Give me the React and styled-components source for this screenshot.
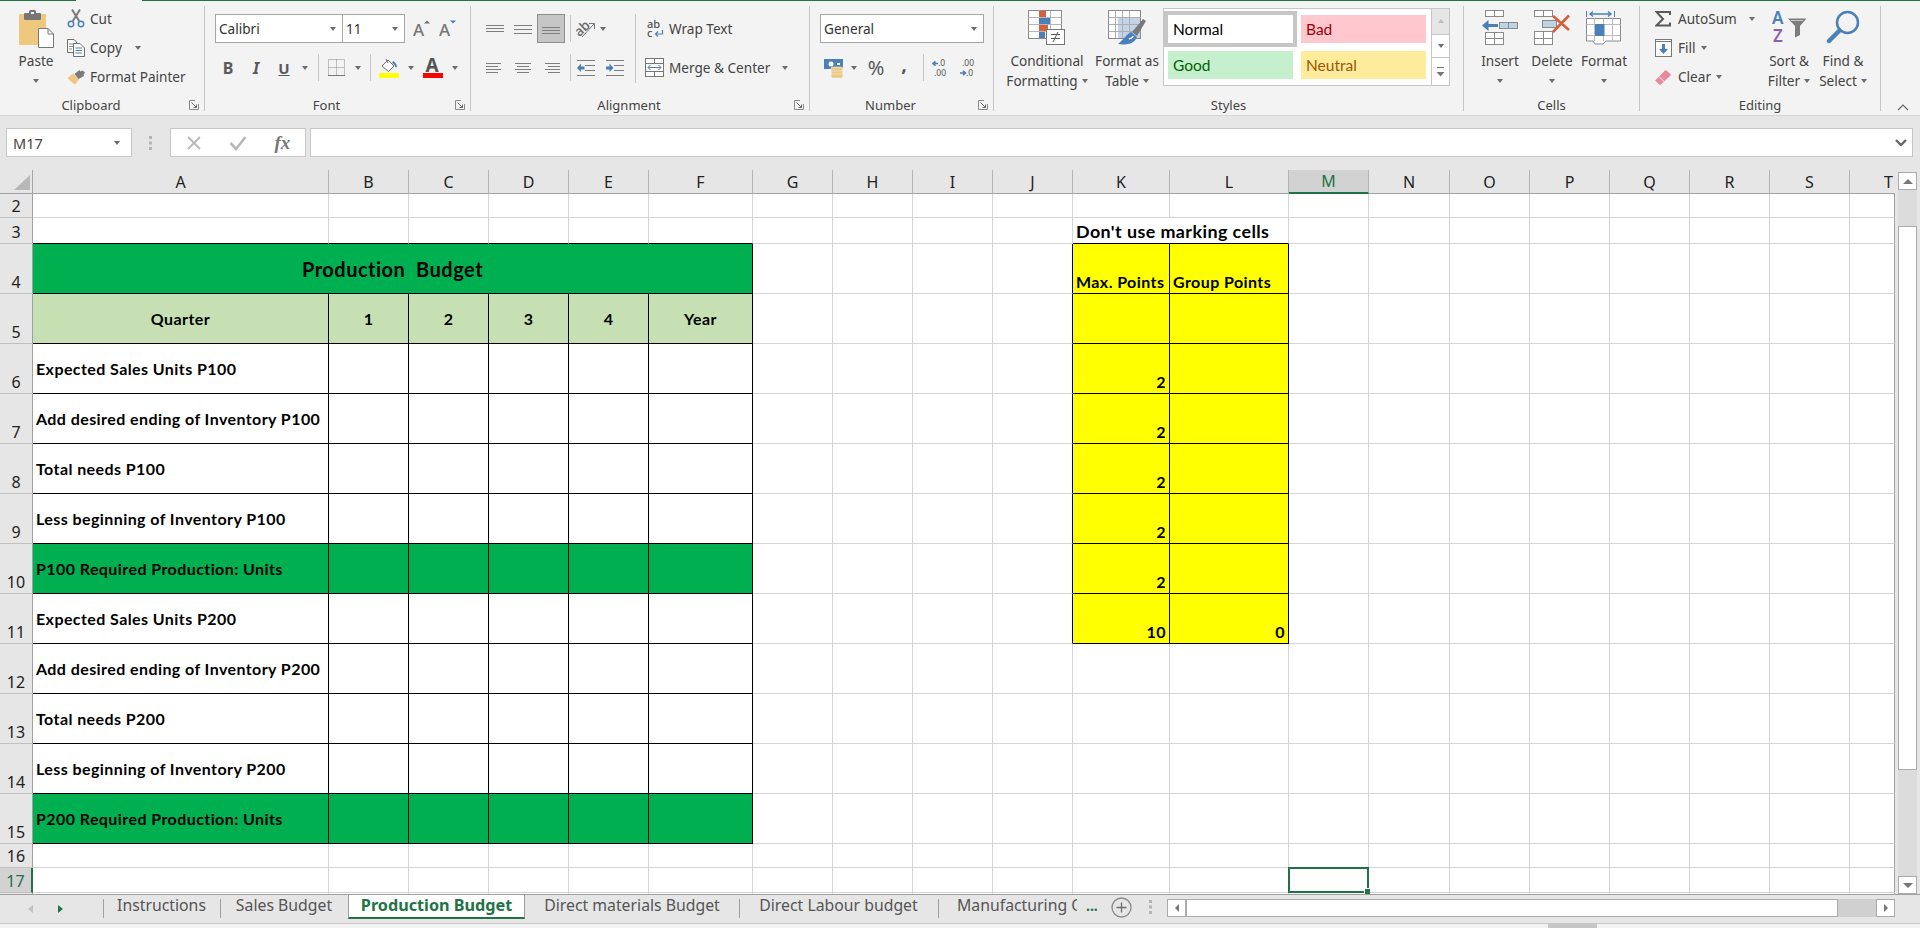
// App.jsx
// Excel window with the Production Budget sheet open

import styled, { createGlobalStyle } from "styled-components";

const UI_FONT = '"Noto Sans", "Open Sans", "Liberation Sans", sans-serif';
const SHEET_FONT = 'Lato, "Noto Sans", "Liberation Sans", sans-serif';

const GREEN = "#00b050";
const LIGHT_GREEN = "#c6e0b4";
const YELLOW = "#ffff00";
const XL_GREEN = "#217346";
const GRID = "#d4d4d4";

const GlobalStyle = createGlobalStyle`
  html, body { margin: 0; padding: 0; height: 100%; overflow: hidden; background: #e6e6e6; }
  body { font-family: ${UI_FONT}; color: #444; }
  * { box-sizing: border-box; }
  svg { display: block; flex: none; }
`;

const Window = styled.div`
  width: 1920px;
  height: 928px;
  display: flex;
  flex-direction: column;
  overflow: hidden;
`;

// Top line of the ribbon, broken under the active tab

const TopLine = styled.div`
  height: 1px;
  flex: none;
  display: flex;
  background: ${XL_GREEN};
`;

const TopGap = styled.div`
  width: 66px;
  margin-left: 76px;
  background: #f3f3f3;
`;

const Ribbon = styled.div`
  height: 115px;
  flex: none;
  display: flex;
  background: #f3f3f3;
  border-bottom: 1px solid #d6d6d6;
`;

const Group = styled.div`
  width: ${(p) => p.$w}px;
  flex: none;
  display: flex;
  flex-direction: column;
`;

const GroupBody = styled.div`
  height: 94px;
  flex: none;
  display: flex;
  align-items: flex-start;
  padding-left: ${(p) => p.$pad || 0}px;
`;

const GroupFooter = styled.div`
  height: 20px;
  display: flex;
  align-items: center;
  font-size: 13px;
  color: #444;
`;

const GroupLabel = styled.div`
  flex: 1;
  text-align: center;
`;

const LauncherSlot = styled.div`
  width: 22px;
  padding-left: 7px;
`;

const GroupSep = styled.div`
  width: 1px;
  flex: none;
  margin: 5px 0 4px;
  background: #c6c6c6;
`;

const CollapseSlot = styled.div`
  flex: 1;
  display: flex;
  align-items: flex-end;
  justify-content: flex-end;
  padding: 0 11px 4px 0;
`;

const LargeButton = styled.div`
  width: ${(p) => p.$w}px;
  flex: none;
  margin-left: ${(p) => p.$ml || 0}px;
  display: flex;
  flex-direction: column;
  align-items: center;
  padding-top: 9px;
  font-size: 13.6px;
  line-height: 20px;
  white-space: nowrap;
`;

const LargeIcon = styled.div`
  height: 41px;
`;

const LabelLine = styled.div`
  height: 20px;
  display: flex;
  align-items: center;
  gap: 4px;
`;

const SmallStack = styled.div`
  width: ${(p) => p.$w}px;
  flex: none;
  margin-left: ${(p) => p.$ml || 0}px;
  padding-top: 3px;
`;

const SmallRow = styled.div`
  height: 29px;
  display: flex;
  align-items: center;
  font-size: 13.6px;
  white-space: nowrap;
`;

const SmallIcon = styled.div`
  width: 23px;
  flex: none;
`;

const Caret = styled.span`
  display: block;
  flex: none;
  width: 0;
  height: 0;
  border-left: 3.5px solid transparent;
  border-right: 3.5px solid transparent;
  border-top: 4px solid #6c6c6c;
  margin-left: ${(p) => p.$ml || 0}px;
`;

const ControlStack = styled.div`
  padding-top: 13px;
  display: flex;
  flex-direction: column;
  gap: 10px;
`;

const ControlRow = styled.div`
  height: 29px;
  display: flex;
  align-items: center;
  padding-left: ${(p) => p.$pad || 0}px;
`;

const Slot = styled.div`
  width: ${(p) => p.$w}px;
  height: ${(p) => (p.$active ? 29 : 24)}px;
  flex: none;
  display: flex;
  align-items: center;
  justify-content: center;
  margin-left: ${(p) => p.$ml || 0}px;
  padding-bottom: ${(p) => p.$raise || 0}px;
  font-size: ${(p) => p.$size || 15}px;
  font-weight: ${(p) => (p.$bold ? 700 : 400)};
  font-style: ${(p) => (p.$italic ? "italic" : "normal")};
  text-decoration: ${(p) => (p.$under ? "underline" : "none")};
  color: #5a5a5a;
  background: ${(p) => (p.$active ? "#c6c6c6" : "transparent")};
  border: ${(p) => (p.$active ? "1px solid #8e8e8e" : "none")};
`;

const ThinSep = styled.div`
  width: 1px;
  height: 27px;
  flex: none;
  margin-left: ${(p) => p.$ml || 0}px;
  background: #c6c6c6;
`;

const TallSep = styled.div`
  width: 1px;
  height: 69px;
  flex: none;
  margin-top: 13px;
  background: #c6c6c6;
`;

const Combo = styled.div`
  width: ${(p) => p.$w}px;
  height: 29px;
  flex: none;
  margin-left: ${(p) => p.$ml || 0}px;
  display: flex;
  align-items: center;
  justify-content: space-between;
  padding: 0 6px 0 3px;
  background: #fff;
  border: 1px solid #a6a6a6;
  font-size: 13.6px;
  color: #333;
`;

const AlignBlock = styled.div`
  width: 164px;
  flex: none;
  padding-left: 10px;
`;

const MergeBlock = styled.div`
  padding: 13px 0 0 9px;
  display: flex;
  flex-direction: column;
  gap: 10px;
`;

const MergeRow = styled.div`
  height: 29px;
  display: flex;
  align-items: center;
  font-size: 13.6px;
  white-space: nowrap;
`;

const MergeIcon = styled.div`
  width: 24px;
  flex: none;
  display: flex;
  justify-content: ${(p) => (p.$end ? "flex-end" : "flex-start")};
  padding-right: ${(p) => (p.$end ? 5 : 0)}px;
`;

// Cell styles gallery

const Gallery = styled.div`
  width: 287px;
  height: 78px;
  flex: none;
  margin-top: 7px;
  display: flex;
  background: #fff;
  border: 1px solid #c6c6c6;
`;

const GalleryGrid = styled.div`
  width: 267px;
  flex: none;
  padding-top: 2px;
  display: grid;
  grid-template-columns: 133px 133px;
  grid-template-rows: 36px 36px;
`;

const GalleryCell = styled.div`
  border: 4px solid ${(p) => (p.$selected ? "#c6c6c6" : "transparent")};
  background: ${(p) => p.$bg};
  background-clip: padding-box;
  color: ${(p) => p.$color};
  font-family: ${SHEET_FONT};
  font-size: 15.5px;
  display: flex;
  align-items: center;
  padding-left: 5px;
`;

const GalleryScroll = styled.div`
  flex: 1;
  display: flex;
  flex-direction: column;
  border-left: 1px solid #c6c6c6;
`;

const GalleryArrow = styled.div`
  flex: ${(p) => p.$grow || 1};
  display: flex;
  align-items: center;
  justify-content: center;
  background: ${(p) => (p.$off ? "#e6e6e6" : "#fff")};
  border-bottom: ${(p) => (p.$last ? "none" : "1px solid #c6c6c6")};
`;

const TinyUp = styled.span`
  width: 0;
  height: 0;
  border-left: 3.5px solid transparent;
  border-right: 3.5px solid transparent;
  border-bottom: 4px solid #bdbdbd;
`;

// Formula bar

const FormulaBar = styled.div`
  height: 54px;
  flex: none;
  display: flex;
  align-items: flex-start;
  padding: 12px 0 0 6px;
  background: #e6e6e6;
`;

const NameBox = styled.div`
  width: 126px;
  height: 29px;
  flex: none;
  display: flex;
  align-items: center;
  justify-content: space-between;
  padding: 0 11px 0 6px;
  background: #fff;
  border: 1px solid #c6c6c6;
  font-size: 14.5px;
  color: #444;
`;

const GripSlot = styled.div`
  width: 38px;
  height: 29px;
  flex: none;
  display: flex;
  align-items: center;
  justify-content: center;
`;

const FxBox = styled.div`
  width: 136px;
  height: 29px;
  flex: none;
  display: flex;
  align-items: center;
  justify-content: space-around;
  padding: 0 1px;
  background: #fff;
  border: 1px solid #c6c6c6;
`;

const FxText = styled.span`
  font-family: "Liberation Serif", serif;
  font-style: italic;
  font-weight: 700;
  font-size: 19px;
  color: #777;
`;

const FormulaInput = styled.div`
  width: 1603px;
  height: 29px;
  flex: none;
  margin-left: 4px;
  display: flex;
  align-items: center;
  justify-content: flex-end;
  padding-right: 5px;
  background: #fff;
  border: 1px solid #c6c6c6;
`;

// Sheet

const SheetArea = styled.div`
  height: 724px;
  flex: none;
  display: flex;
  background: #e6e6e6;
`;

const SheetGrid = styled.div`
  width: 1895px;
  height: 724px;
  flex: none;
  overflow: hidden;
  display: grid;
  grid-template-columns: 33px 296px repeat(4, 80px) 104px repeat(4, 80px) 97px 119px 80px 81px repeat(5, 80px) 45px;
  grid-template-rows: 24px 24px 26px repeat(12, 50px) 24px 25px 30px;
`;

const Corner = styled.div`
  background: #e6e6e6;
  border-right: 1px solid #a6a6a6;
  border-bottom: 1px solid #a0a0a0;
  display: flex;
  padding: 5px 2px 3px 14px;
`;

const CornerMark = styled.div`
  width: 100%;
  height: 100%;
  background: #b8b8b8;
  clip-path: polygon(100% 0, 100% 100%, 0 100%);
`;

const ColHeader = styled.div`
  display: flex;
  align-items: center;
  justify-content: ${(p) => (p.$last ? "flex-end" : "center")};
  padding-right: ${(p) => (p.$last ? 2 : 0)}px;
  font-size: 16px;
  color: ${(p) => (p.$active ? XL_GREEN : "#222")};
  background: ${(p) => (p.$active ? "#d2d2d2" : "#e6e6e6")};
  border-right: ${(p) => (p.$last ? "none" : "1px solid #b4b4b4")};
  border-bottom: ${(p) => (p.$active ? `2px solid ${XL_GREEN}` : "1px solid #a0a0a0")};
`;

const RowHeader = styled.div`
  display: flex;
  align-items: flex-end;
  justify-content: center;
  font-size: 16px;
  line-height: 22px;
  color: ${(p) => (p.$active ? XL_GREEN : "#222")};
  background: ${(p) => (p.$active ? "#d2d2d2" : "#e6e6e6")};
  border-right: ${(p) => (p.$active ? `2px solid ${XL_GREEN}` : "1px solid #a0a0a0")};
  border-bottom: 1px solid #c0c0c0;
`;

const Cell = styled.div`
  grid-column: span ${(p) => p.$span || 1};
  position: relative;
  display: flex;
  align-items: ${(p) => (p.$bottom ? "flex-end" : "center")};
  justify-content: ${(p) => p.$justify || "flex-start"};
  padding: ${(p) => (p.$bottom ? "0 3px 1px" : p.$size === 20 ? "0 3px" : "1px 3px 0")};
  background: ${(p) => p.$bg || "#fff"};
  border-right: 1px solid ${(p) => (p.$edge ? "#a0a0a0" : p.$right ? "#000" : GRID)};
  border-bottom: 1px solid ${(p) => (p.$under ? "#000" : GRID)};
  font-family: ${SHEET_FONT};
  font-weight: 700;
  font-size: ${(p) => p.$size || 16}px;
  letter-spacing: ${(p) => (p.$size === 20 ? 0.5 : 0.42)}px;
  line-height: ${(p) => (p.$bottom ? 20 : 18)}px;
  color: #000;
  white-space: nowrap;
`;

const SelectionBox = styled.div`
  position: absolute;
  inset: -1px;
  border: 2px solid ${XL_GREEN};
  z-index: 2;
`;

const SelectionHandle = styled.div`
  position: absolute;
  right: -3px;
  bottom: -3px;
  width: 6px;
  height: 6px;
  background: ${XL_GREEN};
  border: 1px solid #fff;
  border-width: 1px 0 0 1px;
`;

const VScroll = styled.div`
  flex: 1;
  display: flex;
  flex-direction: column;
  padding: 2px 3px 0 3px;
  background: #e6e6e6;
`;

const ScrollButton = styled.div`
  height: 18px;
  flex: none;
  display: flex;
  align-items: center;
  justify-content: center;
  background: #fff;
  border: 1px solid #ababab;
`;

const ScrollTrack = styled.div`
  flex: 1;
  background: #dcdcdc;
  padding-top: 36px;
  padding-bottom: 106px;
`;

const ScrollThumb = styled.div`
  height: 100%;
  background: #fff;
  border: 1px solid #ababab;
`;

const ArrowUp = styled.span`
  width: 0;
  height: 0;
  border-left: 5px solid transparent;
  border-right: 5px solid transparent;
  border-bottom: 5px solid #777;
`;

const ArrowDown = styled(ArrowUp)`
  border-bottom: none;
  border-top: 5px solid #777;
`;

// Sheet tabs

const TabBar = styled.div`
  height: 25px;
  flex: none;
  display: flex;
  align-items: stretch;
  background: #e6e6e6;
  border-top: 1px solid #9f9f9f;
`;

const TabNav = styled.div`
  width: 103px;
  flex: none;
  display: flex;
  align-items: center;
  padding: 4px 0 0 28px;
  gap: 25px;
`;

const NavLeft = styled.span`
  width: 0;
  height: 0;
  border-top: 4.5px solid transparent;
  border-bottom: 4.5px solid transparent;
  border-right: 5px solid #c0c0c0;
`;

const NavRight = styled.span`
  width: 0;
  height: 0;
  border-top: 4.5px solid transparent;
  border-bottom: 4.5px solid transparent;
  border-left: 5px solid ${XL_GREEN};
`;

const Tab = styled.div`
  width: ${(p) => p.$w}px;
  flex: none;
  position: relative;
  display: flex;
  align-items: flex-start;
  justify-content: ${(p) => (p.$clip ? "flex-start" : "center")};
  overflow: hidden;
  padding-left: ${(p) => (p.$clip ? 19 : 0)}px;
  line-height: 20px;
  white-space: nowrap;
  color: ${(p) => (p.$active ? XL_GREEN : "#555")};
  font-weight: ${(p) => (p.$active ? 700 : 400)};
  font-size: ${(p) => (p.$active ? 16.2 : 15.8)}px;
  background: ${(p) => (p.$active ? "#fff" : "transparent")};
  border-left: ${(p) => (p.$active ? "1px solid #9f9f9f" : "none")};
  border-right: ${(p) => (p.$active ? "1px solid #9f9f9f" : "none")};
  border-bottom: ${(p) => (p.$active ? `2px solid ${XL_GREEN}` : "none")};
  &::before {
    content: "";
    display: ${(p) => (p.$active || p.$bare ? "none" : "block")};
    position: absolute;
    left: 0;
    top: 4px;
    bottom: 1px;
    width: 1px;
    background: #a0a0a0;
  }
`;

const TabMore = styled.div`
  width: 16px;
  flex: none;
  margin-left: 9px;
  color: ${XL_GREEN};
  font-size: 14px;
  font-weight: 700;
  line-height: 22px;
  white-space: nowrap;
`;

const AddSlot = styled.div`
  width: 38px;
  flex: none;
  display: flex;
  align-items: center;
  justify-content: center;
`;

const DotsSlot = styled.div`
  width: 27px;
  flex: none;
  display: flex;
  align-items: center;
  padding-left: 9px;
`;

const HScroll = styled.div`
  width: 728px;
  height: 18px;
  flex: none;
  margin-top: 4px;
  display: flex;
  background: #d0d0d0;
`;

const HButton = styled.div`
  width: 19px;
  flex: none;
  display: flex;
  align-items: center;
  justify-content: center;
  background: #fff;
  border: 1px solid #ababab;
`;

const HThumb = styled.div`
  width: 652px;
  flex: none;
  background: #fff;
  border: 1px solid #ababab;
`;

const HTrack = styled.div`
  flex: 1;
`;

const HLeft = styled.span`
  width: 0;
  height: 0;
  border-top: 4.5px solid transparent;
  border-bottom: 4.5px solid transparent;
  border-right: 4px solid #777;
`;

const HRight = styled.span`
  width: 0;
  height: 0;
  border-top: 4.5px solid transparent;
  border-bottom: 4.5px solid transparent;
  border-left: 4px solid #777;
`;

const StatusBar = styled.div`
  flex: 1;
  display: flex;
  flex-direction: column;
  padding-left: 1548px;
  background: linear-gradient(#e6e6e6 0 4px, #c8c8c8 4px 5px, #f3f3f3 5px);
`;

const StatusNub = styled.div`
  width: 49px;
  height: 4px;
  margin-top: 5px;
  background: #c6c6c6;
`;

// Ribbon icons

const LN = "#6e6e6e";
const BLUE = "#4a80b9";
const PALE = "#bdd3e8";
const RED = "#d5603a";
const TAN = "#edc87e";

const PasteIcon = () => (
  <svg width="36" height="38" viewBox="0 0 36 38">
    <rect x="1" y="4" width="27" height="31" rx="1" fill={TAN} />
    <rect x="6" y="3" width="17" height="7" rx="1" fill="#767676" />
    <rect x="11" y="0" width="7" height="5" rx="1.5" fill="#767676" />
    <rect x="13" y="2" width="3" height="2" fill="#f3f3f3" />
    <path d="M20.5 18.5H30L35.5 24V37.5H20.5Z" fill="#fff" stroke="#777" />
    <path d="M30 18.5V24H35.5" fill="none" stroke="#777" />
  </svg>
);

const ScissorsIcon = () => (
  <svg width="18" height="19" viewBox="0 0 18 19">
    <path d="M5 0.5L12.2 12M13 0.5L5.8 12" stroke="#7a7a7a" strokeWidth="2" fill="none" />
    <circle cx="4" cy="15" r="2.7" fill="none" stroke={BLUE} strokeWidth="1.5" />
    <circle cx="14" cy="15" r="2.7" fill="none" stroke={BLUE} strokeWidth="1.5" />
  </svg>
);

const CopyIcon = () => (
  <svg width="18" height="18" viewBox="0 0 18 18">
    <path d="M0.5 0.5H7L9.5 3V13.5H0.5Z" fill="#fff" stroke="#6e6e6e" />
    <path d="M2 5H7M2 7.5H6M2 10H5" stroke="#8a8a8a" />
    <path d="M6.5 4.5H13L17.5 9V17.5H6.5Z" fill="#fff" stroke="#6e6e6e" />
    <path d="M8.5 9H15M8.5 11.5H15M8.5 14H15" stroke={BLUE} />
  </svg>
);

const PainterIcon = () => (
  <svg width="19" height="16" viewBox="0 0 19 16">
    <path d="M0.5 9L6 4.5L12 10.5L8 15.5C5.5 14 3 12 0.5 9Z" fill={TAN} />
    <path d="M7.5 5L12.5 1L13.5 2.5L15.5 1.5L18 3.5L16.5 5.5L17 7L11.5 10Z" fill="#7a7a7a" />
  </svg>
);

const Launcher = () => (
  <svg width="10" height="10" viewBox="0 0 10 10">
    <path d="M9.5 4V9.5H0.5V0.5H6" fill="none" stroke="#8a8a8a" />
    <path d="M2.5 2.5L7.5 7.5M4.5 7.5H7.5V4.5" fill="none" stroke="#6a6a6a" />
  </svg>
);

const FontSizeIcon = ({ up }) => (
  <svg width="17" height="18" viewBox="0 0 17 18">
    <text x="0" y="16" fontFamily="Noto Sans, sans-serif" fontSize="17" fontWeight="500" fill="#777">A</text>
    {up
      ? <path d="M11 3.5H17L14 0.5Z" fill={LN} />
      : <path d="M11 0.5H17L14 3.5Z" fill={BLUE} />}
  </svg>
);

const BordersIcon = () => (
  <svg width="17" height="17" viewBox="0 0 17 17">
    <path d="M0.5 0.5H16.5V16.5H0.5ZM8.5 0.5V16.5M0.5 8.5H16.5" fill="none" stroke="#8a8a8a" strokeDasharray="1 1" />
    <path d="M0 16.5H17" stroke="#777" />
  </svg>
);

const FillIcon = () => (
  <svg width="20" height="20" viewBox="0 0 20 20">
    <path d="M3 8L9 2L15 8L9.5 13.5Z" fill="#fff" stroke="#6e6e6e" />
    <path d="M7 1L9 5" stroke="#6e6e6e" />
    <path d="M14 3C16 4 18 6 18 9L16.5 9.5C16 7.5 15 6 13 5Z" fill={BLUE} />
    <rect x="0" y="15" width="20" height="5" fill="#ffff00" />
  </svg>
);

const FontColorIcon = () => (
  <svg width="20" height="20" viewBox="0 0 20 20">
    <text x="2.5" y="14" fontFamily="Noto Sans, sans-serif" fontSize="19" fontWeight="700" fill="#555">A</text>
    <rect x="0" y="15" width="20" height="5" fill="#ff0000" />
  </svg>
);

const LinesIcon = ({ lines, w = 18, h = 16 }) => (
  <svg width={w} height={h} viewBox={`0 0 ${w} ${h}`}>
    {lines.map(([a, b, y], i) => <path key={i} d={`M${a} ${y}.5H${b}`} stroke="#7d7d7d" />)}
  </svg>
);

const OrientationIcon = () => (
  <svg width="20" height="20" viewBox="0 0 20 20">
    <text x="0" y="14" transform="rotate(-42 7 12)" fontFamily="Noto Sans, sans-serif" fontSize="13.5" fontWeight="500" fill="#666">ab</text>
    <path d="M6 18L18 5M13 4.5H18.5V10" fill="none" stroke="#777" />
  </svg>
);

const IndentIcon = ({ right }) => (
  <svg width="18" height="16" viewBox="0 0 18 16">
    <path d="M0 1H18M8 6H18M8 11H18M0 16H18" stroke="#7d7d7d" transform="translate(0 -0.5)" />
    {right
      ? <path d="M0 6.5H3.5V3.5L7.5 8L3.5 12V9.5H0Z" fill={BLUE} />
      : <path d="M7.5 6.5H4V3.5L0 8L4 12V9.5H7.5Z" fill={BLUE} />}
  </svg>
);

const WrapIcon = () => (
  <svg width="17" height="18" viewBox="0 0 17 18">
    <text x="0" y="8" fontFamily="Noto Sans, sans-serif" fontSize="11" fontWeight="500" fill="#555">ab</text>
    <text x="0" y="17" fontFamily="Noto Sans, sans-serif" fontSize="11" fontWeight="500" fill="#555">c</text>
    <path d="M15.5 10V14H9M11 11.5L8.5 14L11 16.5" fill="none" stroke={BLUE} strokeWidth="1.2" />
  </svg>
);

const MergeIconSvg = () => (
  <svg width="19" height="19" viewBox="0 0 19 19">
    <rect x="0.5" y="0.5" width="18" height="18" fill="#fff" stroke="#777" />
    <path d="M0.5 5.5H18.5M0.5 13.5H18.5M9.5 0.5V5.5M9.5 13.5V18.5" stroke="#777" />
    <path d="M3 9.5H16M5.5 7L3 9.5L5.5 12M13.5 7L16 9.5L13.5 12" fill="none" stroke={BLUE} />
  </svg>
);

const AccountingIcon = () => (
  <svg width="20" height="20" viewBox="0 0 20 20">
    <rect x="0" y="1" width="19" height="10" fill={BLUE} />
    <circle cx="7" cy="6" r="2.5" fill="#fff" />
    <rect x="13" y="5" width="3" height="2" fill="#fff" />
    <g fill={TAN} stroke="#f3f3f3" strokeWidth="0.6">
      <rect x="7" y="15" width="12" height="5" rx="2" />
      <rect x="7" y="12" width="12" height="4" rx="2" />
      <rect x="7" y="9" width="12" height="4" rx="2" />
    </g>
  </svg>
);

const DecimalIcon = ({ more }) => (
  <svg width="18" height="18" viewBox="0 0 18 18">
    <text x={more ? 6 : 2} y="7" fontFamily="Noto Sans, sans-serif" fontSize="8.5" fill="#555">{more ? ".0" : ".00"}</text>
    <text x={more ? 2 : 6} y="17" fontFamily="Noto Sans, sans-serif" fontSize="8.5" fill="#555">{more ? ".00" : ".0"}</text>
    {more
      ? <path d="M6 4.5H1.5M3.5 2.3L1 4.5L3.5 6.7" fill="none" stroke={BLUE} strokeWidth="1.6" />
      : <path d="M0 14H5M3 11.8L5.5 14L3 16.2" fill="none" stroke={BLUE} strokeWidth="1.6" />}
  </svg>
);

const ConditionalIcon = () => (
  <svg width="38" height="36" viewBox="0 0 38 36">
    <rect x="0.5" y="0.5" width="33" height="28" fill="#fff" stroke="#8a8a8a" />
    <path d="M11.5 0.5V28M22.5 0.5V28M0.5 7.5H33.5M0.5 14.5H33.5M0.5 21.5H33.5" stroke="#b5b5b5" />
    <rect x="11" y="1" width="7" height="6" fill={RED} />
    <rect x="11" y="8" width="11" height="6" fill={BLUE} />
    <rect x="11" y="15" width="9" height="6" fill={RED} />
    <rect x="11" y="22" width="6" height="6" fill={BLUE} />
    <rect x="18.5" y="19.5" width="18" height="15" fill="#fff" stroke="#777" />
    <path d="M23 24.5H32M23 28.5H32M30 22L25 32" stroke="#555" fill="none" />
  </svg>
);

const TableStyleIcon = () => (
  <svg width="38" height="36" viewBox="0 0 38 36">
    <rect x="0.5" y="0.5" width="32" height="28" fill="#fff" stroke="#8a8a8a" />
    <rect x="10" y="7" width="22" height="21" fill="#c3d4e9" />
    <path d="M7.5 0.5V28M14.5 0.5V28M21.5 0.5V28M0.5 7.5H33M0.5 14.5H33M0.5 21.5H33" stroke="#aeaeae" />
    <path d="M24 22L35 9L38 11L29 26Z" fill="#7a7a7a" />
    <path d="M23 22C19 24 16 29 10 34C16 35 26 35 29 27Z" fill={BLUE} />
    <path d="M21 29C23 28 25 28 25 26" stroke="#fff" strokeWidth="1.5" fill="none" />
  </svg>
);

const InsertIcon = () => (
  <svg width="38" height="35" viewBox="0 0 38 35">
    <g fill="#fff" stroke="#8a8a8a">
      <rect x="4.5" y="0.5" width="18" height="6" />
      <path d="M13.5 0.5V6.5" />
      <rect x="4.5" y="22.5" width="18" height="12" />
      <path d="M13.5 22.5V34.5M4.5 28.5H22.5" />
    </g>
    <rect x="18.5" y="12.5" width="18" height="6" fill={PALE} stroke="#8a8a8a" />
    <path d="M27.5 12.5V18.5" stroke="#8a8a8a" />
    <path d="M1 15.5L7.5 10V14H17V17H7.5V21Z" fill={BLUE} />
  </svg>
);

const DeleteIcon = () => (
  <svg width="37" height="35" viewBox="0 0 37 35">
    <g fill="#fff" stroke="#8a8a8a">
      <rect x="0.5" y="0.5" width="18" height="6" />
      <path d="M9.5 0.5V6.5" />
      <rect x="0.5" y="21.5" width="18" height="13" />
      <path d="M9.5 21.5V34.5M0.5 28.5H18.5" />
    </g>
    <rect x="8.5" y="10.5" width="14" height="7" fill={PALE} stroke="#8a8a8a" />
    <path d="M19 6L35 20M35 5.5L19 22" stroke={RED} strokeWidth="2.6" fill="none" />
  </svg>
);

const FormatIcon = () => (
  <svg width="36" height="36" viewBox="0 0 36 36">
    <path d="M0.5 1V7M28.5 1V7" stroke={BLUE} />
    <path d="M4 4H25M7 1.5L4 4L7 6.5M22 1.5L25 4L22 6.5" stroke={BLUE} strokeWidth="1.3" fill="none" />
    <path d="M0.5 8.5H34.5V31H20L17 34H9L7 31H0.5Z" fill="#fff" stroke="#8a8a8a" />
    <path d="M8.5 8.5V31M26.5 8.5V31M17.5 8.5V31M0.5 14.5H34.5M0.5 25.5H34.5" stroke="#bdbdbd" />
    <rect x="9" y="14" width="9.5" height="12" fill={BLUE} />
  </svg>
);

const SigmaIcon = () => (
  <svg width="16" height="16" viewBox="0 0 16 16">
    <path d="M15 4V1H1.5L8 8L1.5 14.5H15V11.5" fill="none" stroke="#5a5a5a" strokeWidth="2" />
  </svg>
);

const FillDownIcon = () => (
  <svg width="17" height="18" viewBox="0 0 17 18">
    <rect x="0.5" y="0.5" width="16" height="17" fill="#fff" stroke="#777" />
    <path d="M0.5 2.5H16.5" stroke="#777" />
    <path d="M7 5H10V10H13L8.5 15L4 10H7Z" fill={BLUE} />
  </svg>
);

const EraserIcon = () => (
  <svg width="16" height="16" viewBox="0 0 16 16">
    <path d="M0.5 11L10 1.5C10.5 1 11 1 11.5 1.5L15.5 5C16 5.5 16 6 15.5 6.5L6 15.5C5.5 16 5 16 4.5 15.5L0.5 12C0 11.5 0 11.5 0.5 11Z" fill="#e88a9b" />
    <path d="M4 7.5L9.5 13" stroke="#f3f3f3" />
  </svg>
);

const SortIcon = () => (
  <svg width="35" height="33" viewBox="0 0 35 33">
    <text x="0" y="14" fontFamily="Noto Sans, sans-serif" fontSize="17" fontWeight="600" fill={BLUE}>A</text>
    <text x="1" y="32" fontFamily="Noto Sans, sans-serif" fontSize="17" fontWeight="600" fill="#8d5fb5">Z</text>
    <path d="M16 8.5H34.5L28 16V25L23 27.5V16Z" fill="#7d7d7d" />
    <path d="M19 10.5H31" stroke="#c8c8c8" />
  </svg>
);

const FindIcon = () => (
  <svg width="35" height="34" viewBox="0 0 35 34">
    <circle cx="21.5" cy="12.5" r="10.5" fill="none" stroke={BLUE} strokeWidth="2.5" />
    <path d="M13.5 20.5L3 31" stroke={BLUE} strokeWidth="4.5" strokeLinecap="round" />
  </svg>
);

const XMark = ({ color = "#b8b8b8" }) => (
  <svg width="16" height="16" viewBox="0 0 16 16">
    <path d="M2 2L14 14M14 2L2 14" stroke={color} strokeWidth="1.8" />
  </svg>
);

const CheckMark = () => (
  <svg width="18" height="16" viewBox="0 0 18 16">
    <path d="M1.5 8L7 14L16.5 2" fill="none" stroke="#b8b8b8" strokeWidth="2.6" />
  </svg>
);

const Grip = () => (
  <svg width="4" height="14" viewBox="0 0 4 14">
    <path d="M0 0h3v3H0zM0 5.5h3v3H0zM0 11h3v3H0z" fill="#b4b4b4" />
  </svg>
);

const Chevron = ({ up, w = 12, color = "#666" }) => (
  <svg width={w} height="7" viewBox="0 0 12 7">
    <path d={up ? "M1 6L6 1L11 6" : "M1 1L6 6L11 1"} fill="none" stroke={color} strokeWidth={up ? 1.2 : 2.4} />
  </svg>
);

const PlusCircle = () => (
  <svg width="21" height="21" viewBox="0 0 21 21">
    <circle cx="10.5" cy="10.5" r="9.5" fill="none" stroke="#8a8a8a" strokeWidth="1.3" />
    <path d="M5.5 10.5H15.5M10.5 5.5V15.5" stroke="#6e6e6e" strokeWidth="1.3" />
  </svg>
);

const MoreIcon = () => (
  <svg width="9" height="10" viewBox="0 0 9 10">
    <path d="M1 0.5H8" stroke="#777" />
    <path d="M0.5 5H8.5L4.5 9.5Z" fill="#777" />
  </svg>
);

// Sheet data

const COLUMNS = "ABCDEFGHIJKLMNOPQRST".split("");

const LABELS = {
  6: "Expected Sales Units P100",
  7: "Add desired ending of Inventory P100",
  8: "Total needs P100",
  9: "Less beginning of Inventory P100",
  10: "P100 Required Production: Units",
  11: "Expected Sales Units P200",
  12: "Add desired ending of Inventory P200",
  13: "Total needs P200",
  14: "Less beginning of Inventory P200",
  15: "P200 Required Production: Units",
};

const QUARTERS = ["Quarter", "1", "2", "3", "4", "Year"];

const MARKS = {
  4: ["Max. Points", "Group Points"],
  6: ["2", ""],
  7: ["2", ""],
  8: ["2", ""],
  9: ["2", ""],
  10: ["2", ""],
  11: ["10", "0"],
};

const SheetRow = ({ row }) => {
  const cells = [];
  const inTable = row >= 4 && row <= 15;
  const inMarks = row >= 4 && row <= 11;

  COLUMNS.forEach((col, i) => {
    if (row === 4 && i > 0 && i < 6) return;
    if (row === 3 && i === 11) return;

    // The title row merges A to F
    if (row === 4 && i === 0) {
      cells.push(<Cell key={col} $span={6} $bg={GREEN} $right $under $justify="center" $size={20}>Production&nbsp; Budget</Cell>);
      return;
    }

    if (i < 6 && inTable) {
      const green = row === 10 || row === 15;
      const head = row === 5;
      cells.push(
        <Cell key={col} $bg={green ? GREEN : head ? LIGHT_GREEN : "#fff"} $right $under $justify={head ? "center" : "flex-start"}>
          {head ? QUARTERS[i] : i === 0 ? LABELS[row] : ""}
        </Cell>
      );
      return;
    }

    if (i === 10 || i === 11) {
      // The note in K3 runs over L3
      if (row === 3) {
        cells.push(<Cell key={col} $span={2} $under $size={17.9}>Don't use marking cells</Cell>);
        return;
      }
      if (inMarks) {
        const text = MARKS[row] ? MARKS[row][i - 10] : "";
        cells.push(
          <Cell key={col} $bg={YELLOW} $right $under $bottom $justify={row === 4 ? "flex-start" : "flex-end"}>
            {text}
          </Cell>
        );
        return;
      }
    }

    cells.push(
      <Cell key={col} $under={row === 3 && i < 6} $right={i === 9 && inMarks} $edge={col === "T"}>
        {row === 17 && col === "M" && <SelectionBox><SelectionHandle /></SelectionBox>}
      </Cell>
    );
  });

  return (
    <>
      <RowHeader $active={row === 17}>{row > 17 ? "" : row}</RowHeader>
      {cells}
    </>
  );
};

const RIBBON_ROWS = {
  top: [[0, 18, 1], [0, 18, 4], [0, 18, 7]],
  middle: [[0, 18, 4], [0, 18, 8], [0, 18, 12]],
  bottom: [[0, 18, 6], [0, 18, 9], [0, 18, 12]],
  left: [[0, 15, 2], [0, 12, 5], [0, 15, 8], [0, 12, 11]],
  center: [[1, 17, 2], [3, 15, 5], [1, 17, 8], [3, 15, 11]],
  right: [[3, 18, 2], [6, 18, 5], [3, 18, 8], [6, 18, 11]],
};

const App = () => (
  <Window>
    <GlobalStyle />

    <TopLine><TopGap /></TopLine>
    <Ribbon>
      {/* Clipboard */}
      <Group $w={204}>
        <GroupBody $pad={11}>
          <LargeButton $w={50}>
            <LargeIcon><PasteIcon /></LargeIcon>
            <LabelLine>Paste</LabelLine>
            <LabelLine><Caret /></LabelLine>
          </LargeButton>
          <SmallStack $w={135} $ml={6}>
            <SmallRow><SmallIcon><ScissorsIcon /></SmallIcon>Cut</SmallRow>
            <SmallRow><SmallIcon><CopyIcon /></SmallIcon>Copy<Caret $ml={13} /></SmallRow>
            <SmallRow><SmallIcon><PainterIcon /></SmallIcon>Format Painter</SmallRow>
          </SmallStack>
        </GroupBody>
        <GroupFooter><GroupLabel>Clipboard</GroupLabel><LauncherSlot><Launcher /></LauncherSlot></GroupFooter>
      </Group>
      <GroupSep />

      {/* Font */}
      <Group $w={265}>
        <GroupBody>
          <ControlStack>
            <ControlRow $pad={10}>
              <Combo $w={128}>Calibri<Caret /></Combo>
              <Combo $w={63} $ml={-1}>11<Caret /></Combo>
              <Slot $w={32}><FontSizeIcon up /></Slot>
              <Slot $w={20}><FontSizeIcon /></Slot>
            </ControlRow>
            <ControlRow $pad={9}>
              <Slot $w={28} $bold $size={16}>B</Slot>
              <Slot $w={28} $italic $bold $size={16}>I</Slot>
              <Slot $w={28} $under $bold $size={15}>U</Slot>
              <Slot $w={14}><Caret /></Slot>
              <ThinSep $ml={6} />
              <Slot $w={35}><BordersIcon /></Slot>
              <Slot $w={8}><Caret /></Slot>
              <ThinSep $ml={8} />
              <Slot $w={36}><FillIcon /></Slot>
              <Slot $w={7}><Caret /></Slot>
              <Slot $w={36} $ml={1}><FontColorIcon /></Slot>
              <Slot $w={7}><Caret /></Slot>
            </ControlRow>
          </ControlStack>
        </GroupBody>
        <GroupFooter><GroupLabel>Font</GroupLabel><LauncherSlot><Launcher /></LauncherSlot></GroupFooter>
      </Group>
      <GroupSep />

      {/* Alignment */}
      <Group $w={338}>
        <GroupBody>
          <AlignBlock>
            <ControlStack>
              <ControlRow>
                <Slot $w={28}><LinesIcon lines={RIBBON_ROWS.top} h={10} /></Slot>
                <Slot $w={28}><LinesIcon lines={RIBBON_ROWS.middle} /></Slot>
                <Slot $w={28} $active><LinesIcon lines={RIBBON_ROWS.bottom} /></Slot>
                <ThinSep $ml={5} />
                <Slot $w={30}><OrientationIcon /></Slot>
                <Slot $w={4}><Caret /></Slot>
              </ControlRow>
              <ControlRow>
                <Slot $w={28}><LinesIcon lines={RIBBON_ROWS.left} h={13} /></Slot>
                <Slot $w={28}><LinesIcon lines={RIBBON_ROWS.center} h={13} /></Slot>
                <Slot $w={28}><LinesIcon lines={RIBBON_ROWS.right} h={13} /></Slot>
                <ThinSep $ml={5} />
                <Slot $w={30}><IndentIcon /></Slot>
                <Slot $w={28}><IndentIcon right /></Slot>
              </ControlRow>
            </ControlStack>
          </AlignBlock>
          <TallSep />
          <MergeBlock>
            <MergeRow><MergeIcon $end><WrapIcon /></MergeIcon>Wrap Text</MergeRow>
            <MergeRow><MergeIcon><MergeIconSvg /></MergeIcon>Merge &amp; Center<Caret $ml={12} /></MergeRow>
          </MergeBlock>
        </GroupBody>
        <GroupFooter><GroupLabel>Alignment</GroupLabel><LauncherSlot><Launcher /></LauncherSlot></GroupFooter>
      </Group>
      <GroupSep />

      {/* Number */}
      <Group $w={183}>
        <GroupBody>
          <ControlStack>
            <ControlRow $pad={10}><Combo $w={164}>General<Caret /></Combo></ControlRow>
            <ControlRow $pad={14}>
              <Slot $w={20}><AccountingIcon /></Slot>
              <Slot $w={20}><Caret /></Slot>
              <Slot $w={24} $size={20}>%</Slot>
              <Slot $w={32} $bold $size={20} $raise={8}>,</Slot>
              <ThinSep $ml={3} />
              <Slot $w={34}><DecimalIcon more /></Slot>
              <Slot $w={22}><DecimalIcon /></Slot>
            </ControlRow>
          </ControlStack>
        </GroupBody>
        <GroupFooter><GroupLabel>Number</GroupLabel><LauncherSlot><Launcher /></LauncherSlot></GroupFooter>
      </Group>
      <GroupSep />

      {/* Styles */}
      <Group $w={469}>
        <GroupBody $pad={17}>
          <LargeButton $w={72}>
            <LargeIcon><ConditionalIcon /></LargeIcon>
            <LabelLine>Conditional</LabelLine>
            <LabelLine>Formatting<Caret /></LabelLine>
          </LargeButton>
          <LargeButton $w={72} $ml={8}>
            <LargeIcon><TableStyleIcon /></LargeIcon>
            <LabelLine>Format as</LabelLine>
            <LabelLine>Table<Caret /></LabelLine>
          </LargeButton>
          <Gallery>
            <GalleryGrid>
              <GalleryCell $selected $bg="#fff" $color="#000">Normal</GalleryCell>
              <GalleryCell $bg="#ffc7ce" $color="#9c0006">Bad</GalleryCell>
              <GalleryCell $bg="#c6efce" $color="#006100">Good</GalleryCell>
              <GalleryCell $bg="#ffeb9c" $color="#9c5700">Neutral</GalleryCell>
            </GalleryGrid>
            <GalleryScroll>
              <GalleryArrow $off $grow={26}><TinyUp /></GalleryArrow>
              <GalleryArrow $grow={24}><Caret /></GalleryArrow>
              <GalleryArrow $grow={28} $last><MoreIcon /></GalleryArrow>
            </GalleryScroll>
          </Gallery>
        </GroupBody>
        <GroupFooter><GroupLabel>Styles</GroupLabel></GroupFooter>
      </Group>
      <GroupSep />

      {/* Cells */}
      <Group $w={175}>
        <GroupBody $pad={10}>
          <LargeButton $w={52}>
            <LargeIcon><InsertIcon /></LargeIcon>
            <LabelLine>Insert</LabelLine>
            <LabelLine><Caret /></LabelLine>
          </LargeButton>
          <LargeButton $w={52}>
            <LargeIcon><DeleteIcon /></LargeIcon>
            <LabelLine>Delete</LabelLine>
            <LabelLine><Caret /></LabelLine>
          </LargeButton>
          <LargeButton $w={52}>
            <LargeIcon><FormatIcon /></LargeIcon>
            <LabelLine>Format</LabelLine>
            <LabelLine><Caret /></LabelLine>
          </LargeButton>
        </GroupBody>
        <GroupFooter><GroupLabel>Cells</GroupLabel></GroupFooter>
      </Group>
      <GroupSep />

      {/* Editing */}
      <Group $w={240}>
        <GroupBody $pad={15}>
          <SmallStack $w={107}>
            <SmallRow><SmallIcon><SigmaIcon /></SmallIcon>AutoSum<Caret $ml={12} /></SmallRow>
            <SmallRow><SmallIcon><FillDownIcon /></SmallIcon>Fill<Caret $ml={5} /></SmallRow>
            <SmallRow><SmallIcon><EraserIcon /></SmallIcon>Clear<Caret $ml={5} /></SmallRow>
          </SmallStack>
          <LargeButton $w={54}>
            <LargeIcon><SortIcon /></LargeIcon>
            <LabelLine>Sort &amp;</LabelLine>
            <LabelLine>Filter<Caret /></LabelLine>
          </LargeButton>
          <LargeButton $w={54}>
            <LargeIcon><FindIcon /></LargeIcon>
            <LabelLine>Find &amp;</LabelLine>
            <LabelLine>Select<Caret /></LabelLine>
          </LargeButton>
        </GroupBody>
        <GroupFooter><GroupLabel>Editing</GroupLabel></GroupFooter>
      </Group>
      <GroupSep />
      <CollapseSlot><Chevron up /></CollapseSlot>
    </Ribbon>

    <FormulaBar>
      <NameBox>M17<Caret /></NameBox>
      <GripSlot><Grip /></GripSlot>
      <FxBox><XMark /><CheckMark /><FxText>fx</FxText></FxBox>
      <FormulaInput><Chevron /></FormulaInput>
    </FormulaBar>

    <SheetArea>
      <SheetGrid>
        <Corner><CornerMark /></Corner>
        {COLUMNS.map((col, i) => (
          <ColHeader key={col} $active={col === "M"} $last={i === COLUMNS.length - 1}>{col}</ColHeader>
        ))}
        {[2, 3, 4, 5, 6, 7, 8, 9, 10, 11, 12, 13, 14, 15, 16, 17, 18].map((row) => (
          <SheetRow key={row} row={row} />
        ))}
      </SheetGrid>
      <VScroll>
        <ScrollButton><ArrowUp /></ScrollButton>
        <ScrollTrack><ScrollThumb /></ScrollTrack>
        <ScrollButton><ArrowDown /></ScrollButton>
      </VScroll>
    </SheetArea>

    <TabBar>
      <TabNav><NavLeft /><NavRight /></TabNav>
      <Tab $w={117}>Instructions</Tab>
      <Tab $w={128}>Sales Budget</Tab>
      <Tab $w={177} $active $bare>Production Budget</Tab>
      <Tab $w={214} $bare>Direct materials Budget</Tab>
      <Tab $w={199}>Direct Labour budget</Tab>
      <Tab $w={139} $clip>Manufacturing Overhead</Tab>
      <TabMore>...</TabMore>
      <AddSlot><PlusCircle /></AddSlot>
      <DotsSlot><Grip /></DotsSlot>
      <HScroll>
        <HButton><HLeft /></HButton>
        <HThumb />
        <HTrack />
        <HButton><HRight /></HButton>
      </HScroll>
    </TabBar>
    <StatusBar><StatusNub /></StatusBar>
  </Window>
);

export default App;
